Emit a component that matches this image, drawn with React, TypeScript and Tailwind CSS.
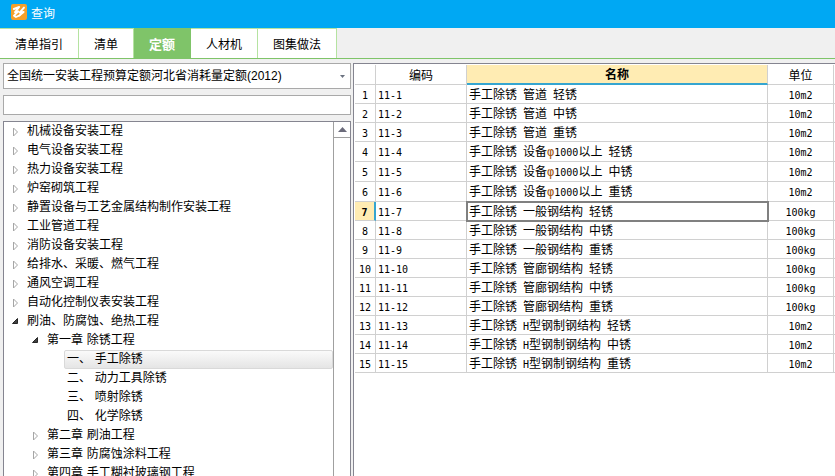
import { useState } from 'react';

const tabs = ['清单指引', '清单', '定额', '人材机', '图集做法'];

type Node = { label: string; level: 0 | 1 | 2; state?: 'open' | 'closed' };

const tree: Node[] = [
  { label: '机械设备安装工程', level: 0, state: 'closed' },
  { label: '电气设备安装工程', level: 0, state: 'closed' },
  { label: '热力设备安装工程', level: 0, state: 'closed' },
  { label: '炉窑砌筑工程', level: 0, state: 'closed' },
  { label: '静置设备与工艺金属结构制作安装工程', level: 0, state: 'closed' },
  { label: '工业管道工程', level: 0, state: 'closed' },
  { label: '消防设备安装工程', level: 0, state: 'closed' },
  { label: '给排水、采暖、燃气工程', level: 0, state: 'closed' },
  { label: '通风空调工程', level: 0, state: 'closed' },
  { label: '自动化控制仪表安装工程', level: 0, state: 'closed' },
  { label: '刷油、防腐蚀、绝热工程', level: 0, state: 'open' },
  { label: '第一章 除锈工程', level: 1, state: 'open' },
  { label: '一、 手工除锈', level: 2 },
  { label: '二、 动力工具除锈', level: 2 },
  { label: '三、 喷射除锈', level: 2 },
  { label: '四、 化学除锈', level: 2 },
  { label: '第二章 刷油工程', level: 1, state: 'closed' },
  { label: '第三章 防腐蚀涂料工程', level: 1, state: 'closed' },
  { label: '第四章 手工糊衬玻璃钢工程', level: 1, state: 'closed' },
];

const indent = ['pl-1', 'pl-6', 'pl-[60px]'];

const rows = [
  { name: '手工除锈 管道 轻锈', unit: '10m2' },
  { name: '手工除锈 管道 中锈', unit: '10m2' },
  { name: '手工除锈 管道 重锈', unit: '10m2' },
  { name: '手工除锈 设备φ1000以上 轻锈', unit: '10m2' },
  { name: '手工除锈 设备φ1000以上 中锈', unit: '10m2' },
  { name: '手工除锈 设备φ1000以上 重锈', unit: '10m2' },
  { name: '手工除锈 一般钢结构 轻锈', unit: '100kg' },
  { name: '手工除锈 一般钢结构 中锈', unit: '100kg' },
  { name: '手工除锈 一般钢结构 重锈', unit: '100kg' },
  { name: '手工除锈 管廊钢结构 轻锈', unit: '100kg' },
  { name: '手工除锈 管廊钢结构 中锈', unit: '100kg' },
  { name: '手工除锈 管廊钢结构 重锈', unit: '100kg' },
  { name: '手工除锈 H型钢制钢结构 轻锈', unit: '10m2' },
  { name: '手工除锈 H型钢制钢结构 中锈', unit: '10m2' },
  { name: '手工除锈 H型钢制钢结构 重锈', unit: '10m2' },
];

// Latin runs are set in a half-width face, so two of them fill one Chinese character
function Mixed({ text }: { text: string }) {
  return (
    <>
      {text.split(/([\x20-\x7e]+|φ)/).map((part, i) => {
        if (part === 'φ') {
          return <span key={i} className="font-['DejaVu_Sans_Mono',monospace] text-[#a3560f]">φ</span>;
        }
        return i % 2 ? (
          <span key={i} className="font-['DejaVu_Sans_Mono',monospace] text-[10px]">{part}</span>
        ) : (
          part
        );
      })}
    </>
  );
}

function Logo() {
  return (
    <svg width="16" height="16" viewBox="0 0 16 16" aria-hidden="true">
      <rect width="16" height="16" rx="2" fill="#f5a02a" />
      <g fill="none" stroke="#fff" strokeLinecap="round" strokeLinejoin="round">
        <path d="M2.800 5 8.200 3 4 8.200 7.400 7.400 3 11.600 5 13 8.600 11.400" strokeWidth="1.900" />
        <path d="M13 3.600 8.600 8.600 12.600 8 8.600 11.400" strokeWidth="1.900" />
      </g>
    </svg>
  );
}

function Expander({ state }: { state?: 'open' | 'closed' }) {
  return (
    <svg width="16" height="18" viewBox="0 0 16 18" className="shrink-0" fill="none" aria-hidden="true">
      {state === 'open' ? (
        <path d="M9.500 5.500v5h-5Z" fill="#404040" stroke="#262626" />
      ) : (
        <path d="M5.500 5v8l4-4Z" fill="#fff" stroke="#a6a6a6" />
      )}
    </svg>
  );
}

export default function App() {
  const [tab, setTab] = useState('定额');
  const [selected, setSelected] = useState('一、 手工除锈');
  const [current, setCurrent] = useState(6);

  return (
    <div className="flex h-screen flex-col overflow-hidden bg-[#f0f0f0] font-['Liberation_Sans','Noto_Sans_CJK_SC',sans-serif] text-xs text-black">
      <header className="flex h-7 shrink-0 items-start gap-1 bg-[#00a8f3] pt-1 pl-[11px] text-white">
        <Logo />
        <h1 className="leading-5">查询</h1>
      </header>

      <nav className="flex h-[31px] shrink-0 border-b border-[#7fc469]">
        {tabs.map((t) => (
          <button
            key={t}
            onClick={() => setTab(t)}
            className={
              t === tab
                ? 'border-t border-r border-[#7fc469] bg-[#7fc469] px-[15px] pt-[2px] text-[13px] font-bold text-white'
                : 'border-t border-r border-[#b5e3a1] bg-white px-[15px] pt-[3px]'
            }
          >
            {t}
          </button>
        ))}
      </nav>

      <div className="flex min-h-0 flex-1 gap-[2px] pt-1">
        <aside className="flex w-[351px] shrink-0 flex-col gap-[6px] pl-[3px]">
          <div className="relative shrink-0">
            <select aria-label="定额库" className="block h-[26px] w-full appearance-none border border-[#a9a9a9] bg-white pl-[3px]">
              <option>全国统一安装工程预算定额河北省消耗量定额(2012)</option>
            </select>
            <svg width="5" height="3" className="pointer-events-none absolute top-3 right-[6px]" aria-hidden="true">
              <path d="M0 0h5L2.500 3Z" fill="#6b7280" />
            </svg>
          </div>
          <input aria-label="搜索" className="h-5 w-full shrink-0 border border-[#a9a9a9] bg-white px-1" />

          <div className="flex min-h-0 flex-1 border border-b-0 border-[#858590] bg-white">
            <ul className="min-w-0 flex-1 overflow-hidden font-['DejaVu_Sans','Noto_Sans_CJK_SC',sans-serif]">
              {tree.map((n) => (
                <li key={n.label} className={`flex h-[19px] items-center ${indent[n.level]}`}>
                  {n.state && <Expander state={n.state} />}
                  <button
                    onClick={() => setSelected(n.label)}
                    className={
                      n.label === selected
                        ? 'h-[19px] flex-1 rounded-xs border border-[#d9d9d9] bg-linear-to-b from-[#fafafa] to-[#e5e5e5] pb-[2px] pl-[2px] text-left leading-[14px] whitespace-nowrap'
                        : 'h-[19px] flex-1 border border-transparent pb-[2px] pl-[2px] text-left leading-[14px] whitespace-nowrap'
                    }
                  >
                    {n.label}
                  </button>
                </li>
              ))}
            </ul>
            <div className="w-[17px] border-l border-[#a0a0a0]">
              <button aria-label="向上滚动" className="flex h-4 w-full items-center justify-center border-b border-[#a0a0a0]">
                <svg width="9" height="5" aria-hidden="true">
                  <path d="M0 5h9L4.500 0Z" fill="#6b6b7b" />
                </svg>
              </button>
            </div>
          </div>
        </aside>

        <main className="min-w-0 flex-1 border-t border-l border-[#858590] bg-white pt-px pl-px">
          <table className="w-full table-fixed border-separate border-spacing-0">
            <colgroup>
              <col className="w-[21px]" />
              <col className="w-[91px]" />
              <col />
              <col className="w-[66px]" />
              <col className="w-px" />
            </colgroup>
            <thead>
              <tr className="h-5">
                <th className="border-r border-b border-[#d0d0d0] p-0" />
                <th className="border-r border-b border-[#d0d0d0] p-0 pt-[2px] font-normal">编码</th>
                <th className="border-r border-b-2 border-r-[#d0d0d0] border-b-[#35a5d0] bg-[#ffecb3] p-0 pt-[2px] font-bold">名称</th>
                <th className="border-r border-b border-[#d0d0d0] p-0 pt-[2px] font-normal">单位</th>
                <th className="border-b border-[#d0d0d0] p-0" />
              </tr>
            </thead>
            <tbody>
              {rows.map((r, i) => (
                <tr key={r.name} onClick={() => setCurrent(i)} className={i > 2 && i < 6 ? 'h-5' : 'h-[19px]'}>
                  <td
                    className={
                      i === current
                        ? 'border-r-2 border-b border-r-[#35a5d0] border-b-[#d0d0d0] bg-[#ffecb3] p-0 pt-[2px] text-center leading-[14px] font-bold'
                        : 'border-r border-b border-[#d0d0d0] p-0 pt-[2px] text-center leading-[14px]'
                    }
                  >
                    <Mixed text={String(i + 1)} />
                  </td>
                  <td className="border-r border-b border-[#d0d0d0] p-0 pt-[2px] pl-[2px] leading-[14px]">
                    <Mixed text={`11-${i + 1}`} />
                  </td>
                  <td
                    className={
                      i === current
                        ? 'border-r border-b border-[#d0d0d0] p-0 pt-[2px] pl-[2px] leading-[14px] outline-2 -outline-offset-1 outline-[#808080]'
                        : 'border-r border-b border-[#d0d0d0] p-0 pt-[2px] pl-[2px] leading-[14px]'
                    }
                  >
                    <Mixed text={r.name} />
                  </td>
                  <td className="border-r border-b border-[#d0d0d0] p-0 pt-[2px] text-center leading-[14px]">
                    <Mixed text={r.unit} />
                  </td>
                  <td className="border-b border-[#d0d0d0] p-0" />
                </tr>
              ))}
            </tbody>
          </table>
        </main>
      </div>
    </div>
  );
}
